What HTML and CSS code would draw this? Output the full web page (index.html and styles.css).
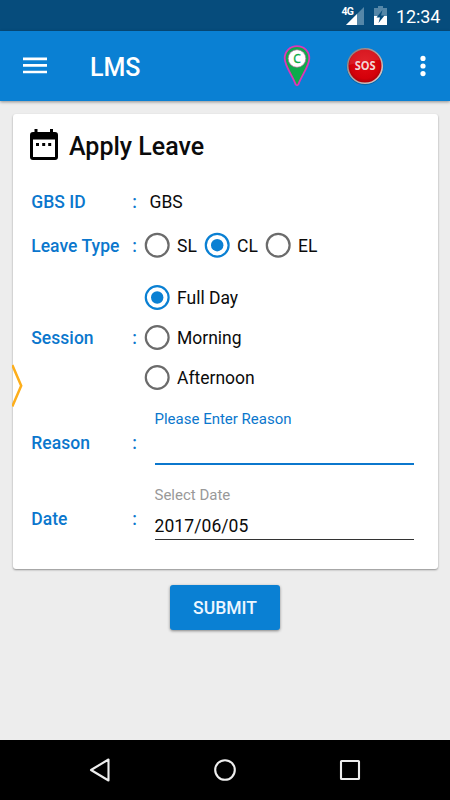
FILE: index.html
```html
<!DOCTYPE html>
<html lang="en">
<head>
<meta charset="utf-8">
<title>LMS</title>
<link rel="stylesheet" href="styles.css">
</head>
<body>
<div class="status">
  <svg class="signal" width="24" height="24" viewBox="0 0 24 24">
    <path d="M22 2V20H4z" fill="#5587a8"/><path d="M15 9V20H4z" fill="#fff"/>
    <text x="-0.5" y="10" class="net">4G</text>
  </svg>
  <svg class="battery" width="14" height="20" viewBox="0 0 14 20">
    <path d="M4 0H9V2H13V10H0V2H4z" fill="#5587a8"/><path d="M0 10H13V19H0z" fill="#fff"/>
    <path d="M8.5 4L2.5 11.5H6L4.5 17L10.5 9.5H7z" fill="#064c7c"/>
  </svg>
  <span class="clock">12:34</span>
</div>
<header class="bar">
  <svg class="menu" width="24" height="18" viewBox="0 0 24 18"><path d="M0 1.8H24M0 8.4H24M0 15H24" stroke="#fff" stroke-width="2.7"/></svg>
  <h1 class="app">LMS</h1>
  <svg class="pin" width="28" height="42" viewBox="0 0 28 42">
    <path d="M14 1.2C7 1.2 1.7 6.5 1.7 13.3C1.7 21 8.6 29 12.6 39.3Q14 41.3 15.4 39.3C19.4 29 26.3 21 26.3 13.3C26.3 6.5 21 1.2 14 1.2z" fill="#0cab4b" stroke="#df35b7" stroke-width="1.8"/>
    <circle cx="14" cy="13.5" r="8.8" fill="#fff" stroke="#b66a9a" stroke-width=".7"/>
    <text x="14" y="17.8" class="pin-c">C</text>
  </svg>
  <svg class="sos" width="40" height="42" viewBox="0 0 40 42">
    <defs>
      <radialGradient id="red" cx=".5" cy=".45" r=".55"><stop offset="0" stop-color="#e10c14"/><stop offset=".75" stop-color="#d4000a"/><stop offset="1" stop-color="#a80008"/></radialGradient>
      <linearGradient id="rim" x1="0" y1="0" x2="1" y2="1"><stop offset="0" stop-color="#817a7b"/><stop offset="1" stop-color="#e0cfcd"/></linearGradient>
    </defs>
    <ellipse cx="20" cy="22" rx="18.3" ry="18.2" fill="#075b96" opacity=".7"/>
    <circle cx="20" cy="21" r="17.3" fill="url(#red)" stroke="url(#rim)" stroke-width="1.6"/>
    <path d="M4 20A16 16 0 0 1 35 15Q21 15 4 20z" fill="#fff" opacity=".1"/>
    <text x="20.2" y="25.3" class="sos-t" textLength="21" lengthAdjust="spacingAndGlyphs">SOS</text>
  </svg>
  <svg class="more" width="6" height="22" viewBox="0 0 6 22"><g fill="#fff"><circle cx="3" cy="3.4" r="2.6"/><circle cx="3" cy="11" r="2.6"/><circle cx="3" cy="18.6" r="2.6"/></g></svg>
</header>
<main>
  <section class="card">
    <svg class="drawer" width="11" height="44" viewBox="0 0 11 44"><path d="M0.3 1L9.2 21.7L0.3 42.5" fill="none" stroke="#fdae1b" stroke-width="2.5"/></svg>
    <div class="head">
      <svg class="calendar" width="30" height="33" viewBox="0 0 30 33">
        <path fill-rule="evenodd" d="M5.5 1H8.5V4H21V1H24V4H26Q29 4 29 7V29Q29 32 26 32H4Q1 32 1 29V7Q1 4 4 4H5.5zM4 11.5V29H26V11.5z"/>
        <path d="M7 15h3v3H7zM13.2 15h3v3h-3zM19.2 15h3v3h-3z"/>
      </svg>
      <h2 class="title">Apply Leave</h2>
    </div>
    <div class="row id"><span class="label">GBS ID</span><span class="colon">:</span><span class="value">GBS</span></div>
    <div class="row type">
      <span class="label">Leave Type</span><span class="colon">:</span>
      <div class="choices">
        <div class="choice sl"><svg class="radio" viewBox="0 0 26 26"><circle cx="13.2" cy="13.2" r="11.4"/></svg><span>SL</span></div>
        <div class="choice cl"><svg class="radio on" viewBox="0 0 26 26"><circle cx="13.2" cy="13.2" r="11.4"/><circle class="dot" cx="13.2" cy="13.2" r="6.2"/></svg><span>CL</span></div>
        <div class="choice"><svg class="radio" viewBox="0 0 26 26"><circle cx="13.2" cy="13.2" r="11.4"/></svg><span>EL</span></div>
      </div>
    </div>
    <div class="row session">
      <span class="label">Session</span><span class="colon">:</span>
      <div class="stack">
        <div class="choice"><svg class="radio on" viewBox="0 0 26 26"><circle cx="13.2" cy="13.5" r="11.4"/><circle class="dot" cx="13.2" cy="13.5" r="6.2"/></svg><span>Full Day</span></div>
        <div class="choice"><svg class="radio" viewBox="0 0 26 26"><circle cx="13.2" cy="13.5" r="11.4"/></svg><span>Morning</span></div>
        <div class="choice"><svg class="radio" viewBox="0 0 26 26"><circle cx="13.2" cy="13.5" r="11.4"/></svg><span>Afternoon</span></div>
      </div>
    </div>
    <div class="row reason">
      <span class="label">Reason</span><span class="colon">:</span>
      <div class="field active"><span class="hint">Please Enter Reason</span></div>
    </div>
    <div class="row date">
      <span class="label">Date</span><span class="colon">:</span>
      <div class="field"><span class="hint">Select Date</span><span class="input">2017/06/05</span></div>
    </div>
  </section>
  <button class="submit">SUBMIT</button>
</main>
<nav class="nav">
  <svg width="22" height="26" viewBox="0 0 22 26"><path d="M20.5 2.5V23.5L3 13z" /></svg>
  <svg width="24" height="24" viewBox="0 0 24 24"><circle cx="12" cy="12" r="9.8"/></svg>
  <svg width="22" height="22" viewBox="0 0 22 22"><rect x="2" y="2" width="18" height="18" rx=".6"/></svg>
</nav>
</body>
</html>
```
FILE: styles.css
```css
* { box-sizing: border-box; }
body { margin: 0; width: 450px; height: 800px; display: flex; flex-direction: column; background: #ededed; font-family: Roboto, "Liberation Sans", sans-serif; color: #0b0b0b; overflow: hidden; }
svg { display: block; flex: none; }
h1, h2 { margin: 0; font-weight: 500; }
.status { height: 31px; flex: none; background: #064c7c; display: flex; align-items: flex-start; justify-content: flex-end; padding-right: 9px; }
.signal { margin: 5px 8px 0 0; overflow: visible; }
.net { font-size: 10.5px; font-weight: 700; fill: #fff; letter-spacing: -.7px; }
.battery { margin: 6px 8px 0 0; }
.clock { color: #fff; font-size: 18px; line-height: 33px; width: 45px; white-space: nowrap; letter-spacing: -.1px; }
.bar { height: 70px; flex: none; background: #0a80d3; display: flex; align-items: center; padding-left: 23px; box-shadow: 0 1px 3px rgba(0,0,0,.4); }
.app { color: #fff; font-size: 25px; margin-left: 43px; width: 150px; padding-top: 2px; }
.pin { margin-left: 43px; }
.pin-c { font-size: 12px; fill: #0cab4b; stroke: #0cab4b; stroke-width: .3px; text-anchor: middle; font-family: "Noto Sans", sans-serif; }
.sos { margin-left: 34px; }
.sos-t { font: 700 12.5px "Open Sans", sans-serif; fill: #f1d6d6; text-anchor: middle; }
.more { margin-left: 35px; }
main { flex: 1; display: flex; flex-direction: column; align-items: center; padding-top: 13px; }
.card { position: relative; width: 425px; height: 455px; flex: none; background: #fff; border-radius: 3px; box-shadow: 0 1px 2px rgba(0,0,0,.4); }
.drawer { position: absolute; left: -1px; top: 250px; }
.head { height: 64px; display: flex; align-items: center; padding-left: 16px; }
.calendar { margin-bottom: 3px; }
.title { font-size: 25px; margin-left: 10.5px; line-height: 32px; padding-top: 2px; }
.row { display: grid; grid-template-columns: 101px 12px 1fr; align-items: center; padding-left: 18px; font-size: 17.5px; }
.label, .colon { color: #0b77cd; font-weight: 500; padding: 1px 0 0 .7px; letter-spacing: .05px; }
.reason .label, .reason .colon, .date .label, .date .colon { padding-top: 0; }
.id { height: 46px; }
.value { padding: 1px 0 0 6px; }
.type { height: 42px; }
.choices { display: flex; }
.choice { display: flex; align-items: center; height: 40px; }
.choice span { margin-left: 7.5px; padding-top: 2px; }
.sl { width: 60px; }
.cl { width: 61px; }
.radio { width: 26px; height: 26px; fill: none; stroke: #6b6b6b; stroke-width: 2.2; }
.on { stroke: #0a80d3; }
.radio .dot { fill: #0a80d3; stroke: none; }
.session { margin-top: 11px; height: 120px; }
.session .label, .session .colon { padding-top: 2px; }
.reason { height: 92px; }
.date { height: 60px; }
.field { width: 259px; margin-left: 11px; height: 55px; border-bottom: 1px solid #333; display: flex; flex-direction: column; }
.date .field { margin-top: -4px; align-self: start; }
.hint { font-size: 15px; line-height: 20px; color: #999; }
.active { height: 54px; align-self: start; margin-top: 14px; border-bottom: 2px solid #0b77cd; }
.active .hint { color: #0b77cd; margin-top: -2px; }
.input { line-height: 24px; margin-top: 9px; letter-spacing: .08px; }
.submit { margin-top: 16px; width: 110px; height: 45px; flex: none; border: 0; border-radius: 3px; background: #0a80d3; color: #edf6ff; font: 500 17.5px Roboto, sans-serif; box-shadow: 0 1px 3px rgba(0,0,0,.45); padding: 1px 0 0; }
.nav { height: 60px; flex: none; background: #000; display: flex; align-items: center; justify-content: space-between; padding: 0 89px 0 88px; }
.nav svg { fill: none; stroke: #eee; stroke-width: 2.1; stroke-linejoin: round; }
```
